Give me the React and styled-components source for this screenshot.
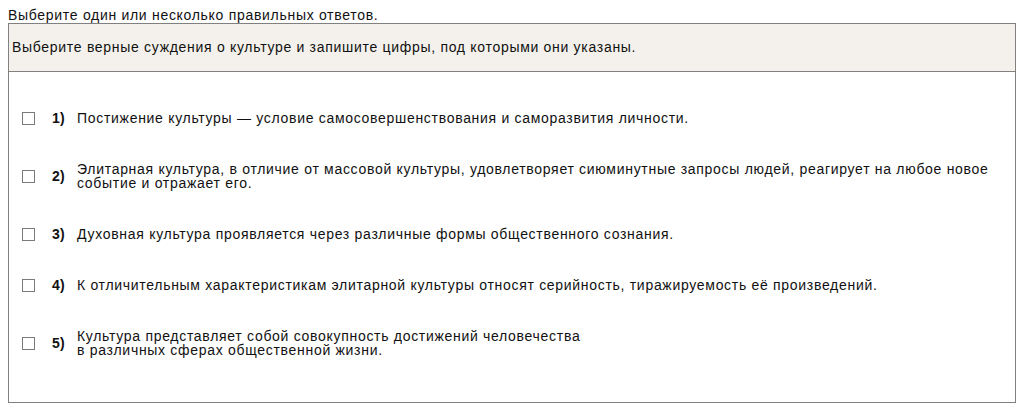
import styled, { createGlobalStyle } from "styled-components";

const GlobalStyle = createGlobalStyle`
  body {
    margin: 8px;
    font-family: "Liberation Sans", Arial, sans-serif;
    font-size: 14px;
    letter-spacing: 0.7px;
    color: #111;
    background: #fff;
  }
`;

const Hint = styled.div`
  line-height: 15px;
`;

const Task = styled.section`
  border: 1px solid #808080;
`;

const Question = styled.div`
  background-color: #f4f1ec;
  border-bottom: 1px solid #808080;
  padding: 16px 2px 16px 3px;
  line-height: 15px;
`;

const Options = styled.ul`
  list-style: none;
  margin: 0;
  padding: 21px 0 26px;
`;

const Option = styled.li`
  display: flex;
  align-items: center;
  padding: 18px 20px 19px 13px;
  line-height: 14px;
`;

const Box = styled.span`
  flex: none;
  width: 11px;
  height: 11px;
  border: 1px solid #7a7a7a;
  background: #fff;
  margin-right: 17px;
`;

const Num = styled.b`
  flex: none;
  width: 25px;
  letter-spacing: 0.3px;
`;

const Text = styled.span`
  flex: 1;
`;

const options = [
  "Постижение культуры — условие самосовершенствования и саморазвития личности.",
  "Элитарная культура, в отличие от массовой культуры, удовлетворяет сиюминутные запросы людей, реагирует на любое новое событие и отражает его.",
  "Духовная культура проявляется через различные формы общественного сознания.",
  "К отличительным характеристикам элитарной культуры относят серийность, тиражируемость её произведений.",
  [
    "Культура представляет собой совокупность достижений человечества",
    "в различных сферах общественной жизни.",
  ],
];

export default function App() {
  return (
    <>
      <GlobalStyle />
      <Hint>Выберите один или несколько правильных ответов.</Hint>
      <Task>
        <Question>
          Выберите верные суждения о культуре и запишите цифры, под которыми они указаны.
        </Question>
        <Options>
          {options.map((text, i) => (
            <Option key={i}>
              <Box />
              <Num>{i + 1})</Num>
              <Text>
                {Array.isArray(text) ? (
                  <>
                    {text[0]}
                    <br />
                    {text[1]}
                  </>
                ) : (
                  text
                )}
              </Text>
            </Option>
          ))}
        </Options>
      </Task>
    </>
  );
}
